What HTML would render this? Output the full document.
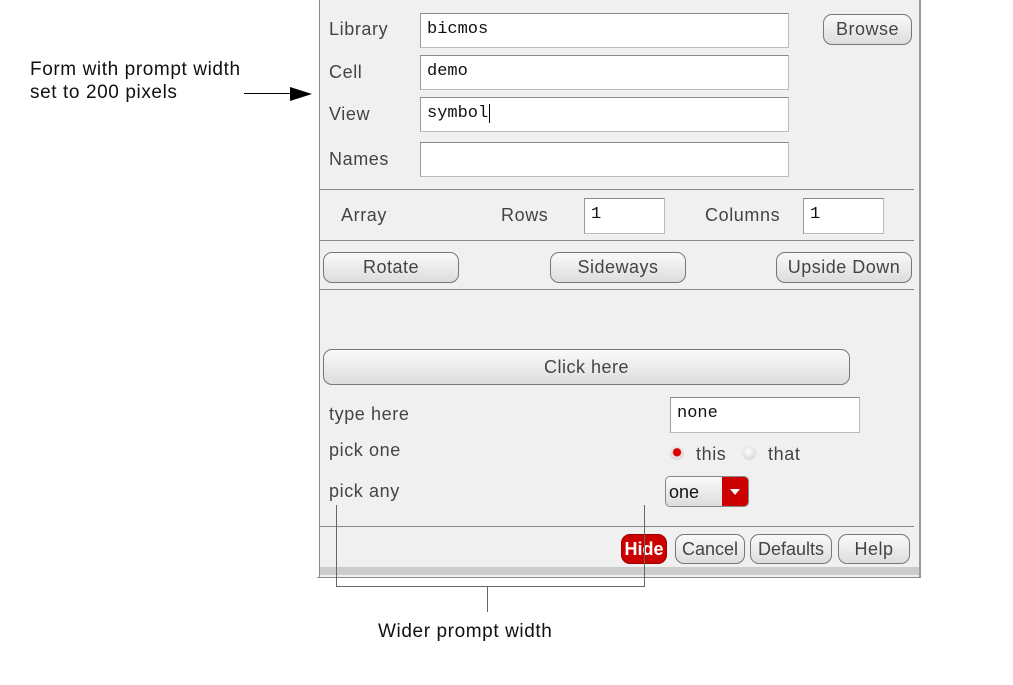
<!DOCTYPE html><html><head><style>
body{margin:0;width:1013px;height:685px;background:#fff;position:relative;font-family:"Liberation Sans",sans-serif;overflow:hidden}
.a{position:absolute}
.l{position:absolute;font-size:18px;color:#444;letter-spacing:0.6px}
.f{position:absolute;background:#fff;border:1px solid #bbb;border-top-color:#888;border-left-color:#999;box-sizing:border-box;font-family:"Liberation Mono",monospace;font-size:17px;color:#111;padding:6px 0 0 6px}
.b{position:absolute;box-sizing:border-box;border:1px solid #777;border-radius:9px;background:linear-gradient(#fafafa,#ddd);font-size:18px;color:#444;text-align:center;letter-spacing:0.5px;white-space:nowrap}
.s{position:absolute;left:320px;width:594px;height:1px;background:#888}
.t{position:absolute;font-size:19px;color:#111;letter-spacing:0.6px}
</style></head><body>
<div class="a" style="left:319px;top:0;width:602px;height:577px;background:#f0f0f0;border-left:1px solid #888;border-right:2px solid #999;box-sizing:border-box"></div>
<div class="a" style="left:320px;top:567px;width:599px;height:8px;background:#ccc"></div>
<div class="a" style="left:317px;top:577px;width:604px;height:1px;background:#888"></div>
<div class="s" style="top:189px"></div><div class="s" style="top:240px"></div><div class="s" style="top:289px"></div><div class="s" style="top:526px"></div>
<div class="l" style="left:329px;top:19px">Library</div>
<div class="l" style="left:329px;top:62px">Cell</div>
<div class="l" style="left:329px;top:104px">View</div>
<div class="l" style="left:329px;top:149px">Names</div>
<div class="f" style="left:420px;top:13px;width:369px;height:35px">bicmos</div>
<div class="f" style="left:420px;top:55px;width:369px;height:35px">demo</div>
<div class="f" style="left:420px;top:97px;width:369px;height:35px">symbol<span style="border-left:1px solid #000;margin-left:1px"></span></div>
<div class="f" style="left:420px;top:142px;width:369px;height:35px"></div>
<div class="b" style="left:823px;top:14px;width:89px;height:31px;line-height:29px">Browse</div>
<div class="l" style="left:341px;top:205px">Array</div>
<div class="l" style="left:501px;top:205px">Rows</div>
<div class="l" style="left:705px;top:205px">Columns</div>
<div class="f" style="left:584px;top:198px;width:81px;height:36px">1</div>
<div class="f" style="left:803px;top:198px;width:81px;height:36px">1</div>
<div class="b" style="left:323px;top:252px;width:136px;height:31px;line-height:29px">Rotate</div>
<div class="b" style="left:550px;top:252px;width:136px;height:31px;line-height:29px">Sideways</div>
<div class="b" style="left:776px;top:252px;width:136px;height:31px;line-height:29px">Upside Down</div>
<div class="b" style="left:323px;top:349px;width:527px;height:36px;line-height:34px">Click here</div>
<div class="l" style="left:329px;top:404px">type here</div>
<div class="l" style="left:329px;top:440px">pick one</div>
<div class="l" style="left:329px;top:481px">pick any</div>
<div class="f" style="left:670px;top:397px;width:190px;height:36px">none</div>
<div class="a" style="left:670px;top:446px;width:14px;height:14px;border-radius:50%;background:radial-gradient(circle at 50% 45%,#d00 35%,#eee 45%,#bbb)"></div>
<div class="l" style="left:696px;top:444px">this</div>
<div class="a" style="left:742px;top:446px;width:14px;height:14px;border-radius:50%;background:radial-gradient(circle at 45% 40%,#fff,#ccc)"></div>
<div class="l" style="left:768px;top:444px">that</div>
<div class="a" style="left:665px;top:476px;width:84px;height:31px;border:1px solid #888;border-radius:5px;box-sizing:border-box;background:linear-gradient(#fafafa,#ddd);overflow:hidden">
<span style="position:absolute;left:3px;top:5px;font-size:18px;color:#111">one</span>
<div style="position:absolute;right:0;top:0;width:26px;height:31px;background:#c00"><div style="position:absolute;left:8px;top:12px;border-left:5px solid transparent;border-right:5px solid transparent;border-top:6px solid #fff"></div></div></div>
<div class="b" style="left:621px;top:534px;width:46px;height:30px;line-height:28px;background:#c00;color:#fff;font-weight:bold;border-color:#900;letter-spacing:0">Hide</div>
<div class="b" style="left:675px;top:534px;width:70px;height:30px;line-height:28px;letter-spacing:0">Cancel</div>
<div class="b" style="left:750px;top:534px;width:82px;height:30px;line-height:28px;letter-spacing:0">Defaults</div>
<div class="b" style="left:838px;top:534px;width:72px;height:30px;line-height:28px">Help</div>
<div class="t" style="left:30px;top:58px;line-height:23px">Form with prompt width<br>set to 200 pixels</div>
<div class="a" style="left:244px;top:93px;width:50px;height:1px;background:#000"></div>
<div class="a" style="left:290px;top:87px;border-top:7px solid transparent;border-bottom:7px solid transparent;border-left:22px solid #000"></div>
<div class="a" style="left:336px;top:505px;width:1px;height:81px;background:#666"></div>
<div class="a" style="left:644px;top:505px;width:1px;height:81px;background:#666"></div>
<div class="a" style="left:336px;top:586px;width:309px;height:1px;background:#666"></div>
<div class="a" style="left:487px;top:587px;width:1px;height:25px;background:#666"></div>
<div class="t" style="left:378px;top:621px">Wider prompt width</div>
</body></html>
